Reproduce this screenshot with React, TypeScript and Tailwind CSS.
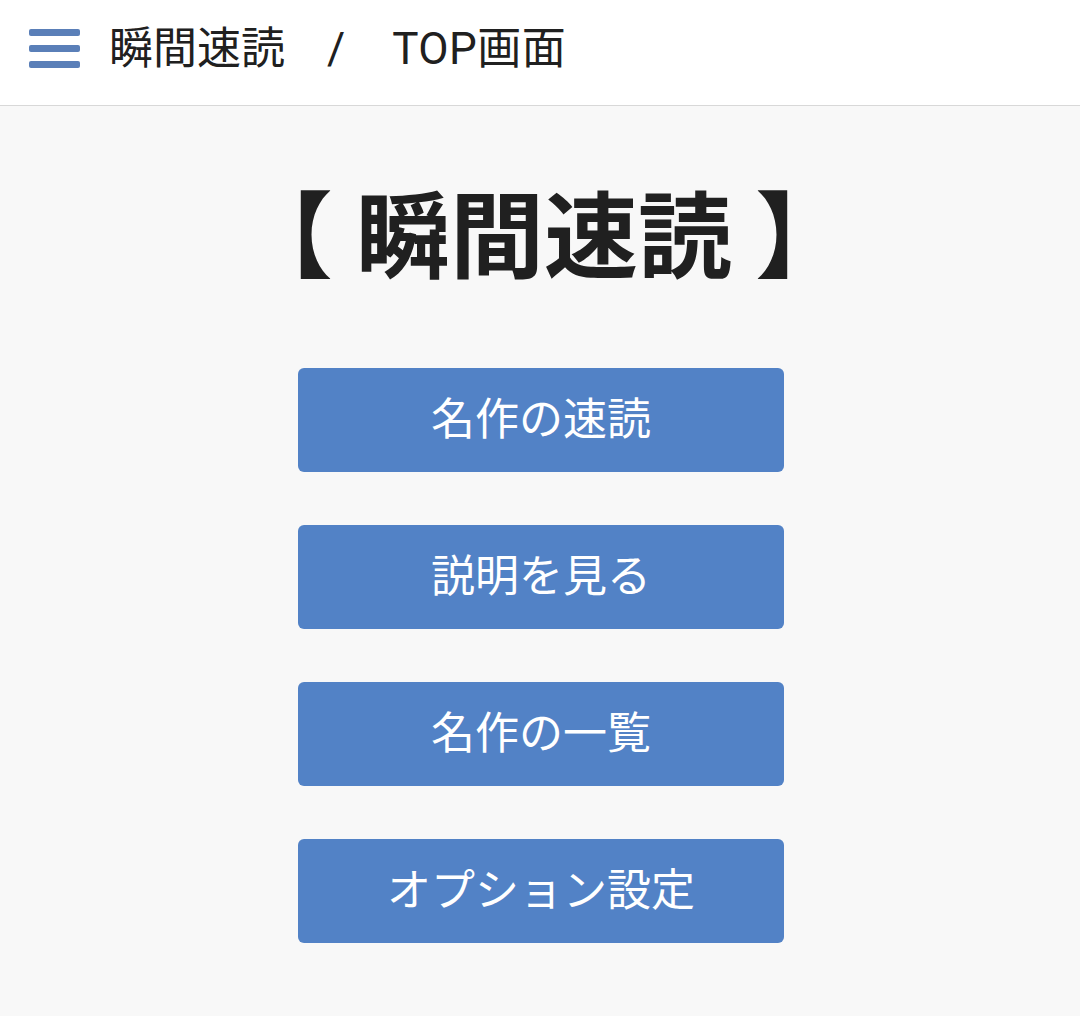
export default function App() {
  const items = ["名作の速読", "説明を見る", "名作の一覧", "オプション設定"]
  return (
    <div className="min-h-[1016px] bg-[#f8f8f8] font-['Roboto','Noto_Sans_CJK_JP',sans-serif] text-[#202020]">
      {/* Header */}
      <header className="flex h-[106px] items-center border-b border-[#d8d8d8] bg-white pb-2">
        <div className="ml-[29px] flex w-[51px] flex-col gap-[9px]">
          <span className="h-[7px] rounded-[2px] bg-[#5a7fb8]" />
          <span className="h-[7px] rounded-[2px] bg-[#5a7fb8]" />
          <span className="h-[7px] rounded-[2px] bg-[#5a7fb8]" />
        </div>
        <h1 className="ml-[29px] flex items-center text-[44px] leading-none">
          <span>瞬間速読</span>
          <span className="mr-[47px] ml-[42px]">/</span>
          <span className="tracking-[0.5px]">TOP画面</span>
        </h1>
      </header>

      {/* Main */}
      <main className="flex flex-col items-center">
        <h2 className="mt-[86px] ml-[8px] text-[94px] leading-none font-bold">【 瞬間速読 】</h2>
        <div className="mt-[82px] ml-[2px] flex flex-col gap-[53px]">
          {items.map((label) => (
            <button
              key={label}
              className="flex h-[104px] w-[486px] items-center justify-center rounded-[6px] bg-[#5282c6] text-[44px] text-white"
            >
              {label}
            </button>
          ))}
        </div>
      </main>
    </div>
  )
}
